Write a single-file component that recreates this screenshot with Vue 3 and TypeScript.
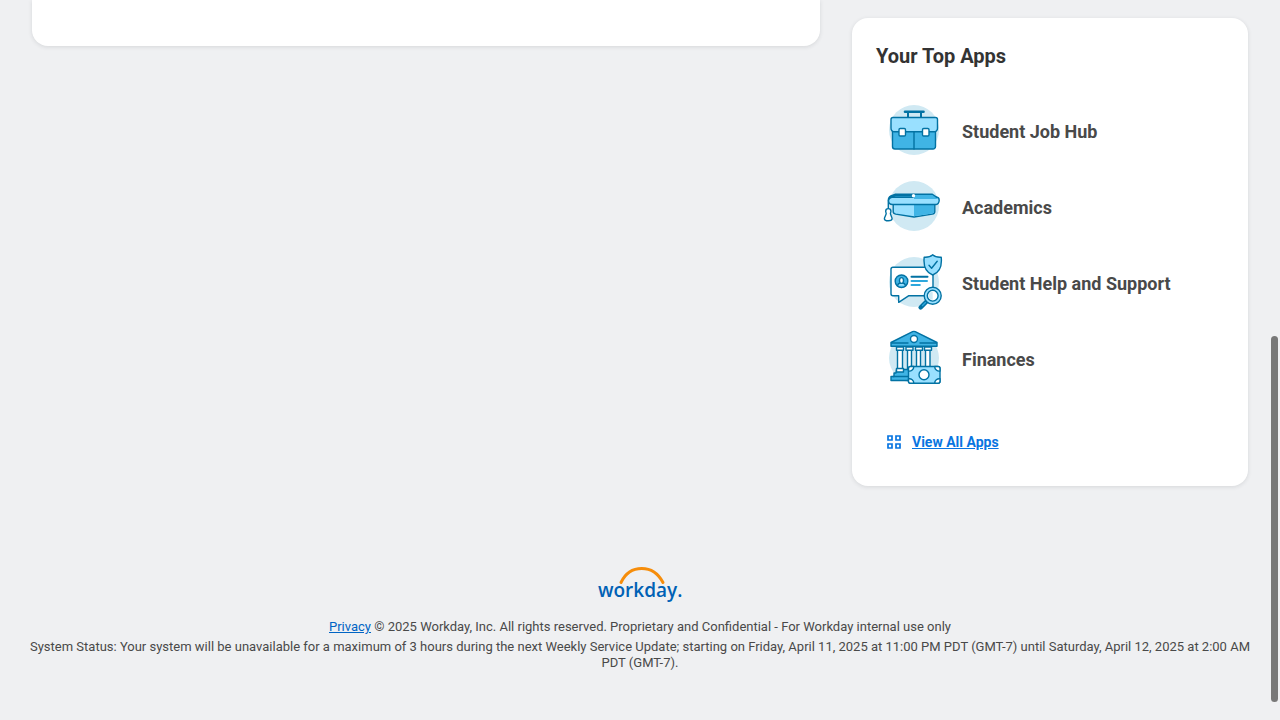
<script setup lang="ts">
type IconName = 'briefcase' | 'cap' | 'support' | 'finance'

interface AppEntry {
  name: string
  icon: IconName
}

const apps: AppEntry[] = [
  { name: 'Student Job Hub', icon: 'briefcase' },
  { name: 'Academics', icon: 'cap' },
  { name: 'Student Help and Support', icon: 'support' },
  { name: 'Finances', icon: 'finance' },
]
</script>

<template>
  <div class="page">
    <main class="columns">
      <section class="card feed" aria-label="Feed"></section>

      <section class="card apps" aria-labelledby="apps-title">
        <h2 id="apps-title" class="title">Your Top Apps</h2>
        <ul class="list">
          <li v-for="app in apps" :key="app.name">
            <a class="app" href="#">
              <svg class="icon" viewBox="0 -2 76 76" aria-hidden="true">
                <circle class="halo" cx="38" cy="34" r="25" />

                <g v-if="app.icon === 'briefcase'" class="line">
                  <path class="none" d="M32 22v-6M45 22v-6" stroke-width="2" />
                  <path class="none" d="M29 15.7h18.5" stroke-width="2.6" />
                  <path class="mid" d="M16.5 34h43v16.500a2.500 2.500 0 0 1-2.500 2.500H19a2.500 2.500 0 0 1-2.500-2.500z" />
                  <path class="none" d="M38 36v17" />
                  <path class="light" d="M17 21.500h42.500a2 2 0 0 1 2 2V32a3.500 3.500 0 0 1-3.500 3.800H18.500A3.500 3.500 0 0 1 15 32v-8.500a2 2 0 0 1 2-2z" />
                  <rect class="white" x="23" y="32.500" width="6.500" height="7.500" rx="1.200" />
                  <rect class="white" x="46.500" y="32.500" width="6.500" height="7.500" rx="1.200" />
                </g>

                <g v-else-if="app.icon === 'cap'" class="line">
                  <path class="light" d="M17.200 31v8.500c0 1.800 1 2.300 2.500 2.600L38 45l18.300-2.900c1.700-.3 2.500-1 2.500-2.600V31z" />
                  <path class="mid bare" d="M38 32h20v7.500c0 1.200-.5 1.700-1.800 2L38 44.300z" />
                  <path class="mid" d="M19 22.200h37l6 3.800H14z" />
                  <path class="light" d="M14 25.300h46.500c1.600 0 2.700 1.300 2.700 3s-1.200 4.200-3 4.200H16.500c-2.500 0-4-1.700-4-4z" />
                  <path class="mid bare" d="M38 23h18l6 4H38z" />
                  <path class="none" d="M36 23.500H19.500L14 26" />
                  <circle class="white bare" cx="37.500" cy="23.700" r="1.700" />
                  <path class="none" d="M12.300 37V28c0-2.500 2-4.200 5.500-5" />
                  <path class="white" d="M9.700 39.200a2.600 2.600 0 0 1 5.200 0c0 1-.5 1.700-.5 2.300 0 1.200 1.800 4 1.700 5.200-.1 1.500-1.700 2.100-3.800 2.100s-3.900-.6-3.900-2.100c0-1.300 1.800-4 1.800-5.200 0-.7-.5-1.200-.5-2.300z" />
                </g>

                <g v-else-if="app.icon === 'support'" class="line">
                  <path class="white" d="M17 19.300h38a2 2 0 0 1 2 2v24.500a2 2 0 0 1-2 2H32.500l-9.800 6.500v-6.500H17a2 2 0 0 1-2-2V21.300a2 2 0 0 1 2-2z" />
                  <circle class="mid" cx="25.500" cy="33.300" r="6.300" />
                  <path class="light" d="M21.700 37.700c0-2 1.400-2.700 3.800-2.700s3.800.7 3.800 2.700" />
                  <ellipse class="white" cx="25.500" cy="32.500" rx="2" ry="2.900" />
                  <path class="none" d="M35.500 28.700h16" stroke-width="2" />
                  <path class="none blue" d="M35.500 33h15.500M35.500 37h8.300" stroke-width="2" />
                  <path class="light" d="M56.700 6.800c2 1.900 5 2.600 8.500 2.400.8 7.300-.2 14.800-8.500 17.800-8.300-3-9.300-10.500-8.500-17.800 3.500.2 6.500-.5 8.500-2.400z" />
                  <path class="none" d="M53 17.200l2.600 3 5.600-7" />
                  <path class="none" d="M50.800 53.300l-6.200 6.200" stroke-width="4.400" />
                  <path class="none blue" d="M49.500 54.500l-3 3" stroke-width="1.400" />
                  <circle class="light" cx="56.700" cy="47.700" r="8.500" />
                  <circle class="white" cx="56.700" cy="47.700" r="5.400" />
                  <path class="halo bare" d="M56.700 47.700v-4a4 4 0 0 0-4 4 4 4 0 0 0 4 4z" />
                </g>

                <g v-else class="line">
                  <path class="mid" d="M20.500 45.500h34l1 3.500h3v3.500h3v4h-46.500v-4h3V49h2z" />
                  <path class="none" d="M17 52.500h40" />
                  <path class="white" d="M21.500 25.500h5V45h-5zM31.500 25.500h4V45h-4zM40.500 25.500h4V45h-4zM49.500 25.500h4.500V45h-4.500z" />
                  <path class="white" d="M20.500 23h7v3.200h-7zM30 23h7v3.200h-7zM39.500 23h7v3.200h-7zM48.500 23h7v3.200h-7zM20.500 44.500h7V48h-7z" />
                  <path class="mid" d="M15 18.500L36.600 7.700c.9-.4 1.700-.4 2.600 0L61 18.500v3.700H15z" />
                  <path class="none" d="M15.500 19H32M44 19h16.500" />
                  <circle class="white" cx="38" cy="15" r="3.500" />
                  <rect class="light" x="32.500" y="42.500" width="31.500" height="16.800" rx="2" />
                  <path class="white" d="M34.500 42.500h3.300a4.500 4.500 0 0 1-5.300 4.500v-2.500a2 2 0 0 1 2-2zM62 42.500h-3.300a4.500 4.500 0 0 0 5.300 4.500v-2.500a2 2 0 0 0-2-2zM34.500 59.300h3.300a4.500 4.500 0 0 0-5.300-4.500v2.500a2 2 0 0 0 2 2zM62 59.300h-3.300a4.500 4.500 0 0 1 5.300-4.500v2.500a2 2 0 0 1-2 2z" />
                  <circle class="white" cx="48" cy="50.700" r="5" />
                </g>
              </svg>
              <span>{{ app.name }}</span>
            </a>
          </li>
        </ul>
        <a class="all" href="#">
          <svg class="grid-icon" viewBox="0 0 16 16" aria-hidden="true">
            <path d="M2 2h4v4H2zM10 2h4v4h-4zM2 10h4v4H2zM10 10h4v4h-4z" />
          </svg>
          <span>View All Apps</span>
        </a>
      </section>
    </main>

    <footer class="footer">
      <svg class="logo" viewBox="0 0 88 40" role="img" aria-label="Workday">
        <path class="arc" d="M25 18.500C29 10 36 4.500 45.800 4.500S62.500 10 67 18.500" />
        <text x="2" y="33">workday.</text>
      </svg>
      <p class="legal">
        <a href="#">Privacy</a> © 2025 Workday, Inc. All rights reserved. Proprietary and Confidential - For Workday internal use only
      </p>
      <p class="status">
        System Status: Your system will be unavailable for a maximum of 3 hours during the next Weekly Service Update; starting on Friday, April 11, 2025 at 11:00 PM PDT (GMT-7) until Saturday, April 12, 2025 at 2:00 AM PDT (GMT-7).
      </p>
    </footer>

    <div class="scroll-thumb" aria-hidden="true"></div>
  </div>
</template>

<style>
body {
  background: #eff0f2;
}
</style>

<style scoped>
.page {
  box-sizing: border-box;
  min-height: 100vh;
  overflow: hidden;
  background: #eff0f2;
  color: #494949;
  font-family: Roboto, "Liberation Sans", sans-serif;
}
.columns {
  display: grid;
  grid-template-columns: minmax(0, 1fr) 396px;
  gap: 32px;
  align-items: start;
  padding: 0 32px;
}
.card {
  box-sizing: border-box;
  border-radius: 16px;
  background: #fff;
  box-shadow: 0 1px 4px rgba(31, 38, 46, 0.12);
}
.feed {
  border-radius: 0 0 16px 16px;
  min-height: 46px;
}
.apps {
  margin-top: 18px;
  padding: 24px;
}
.title {
  margin: 0 0 24px;
  color: #333;
  font-size: 20px;
  font-weight: 700;
  line-height: 28px;
}
.list {
  margin: 0 0 24px;
  padding: 0;
  list-style: none;
}
.app {
  display: flex;
  align-items: center;
  gap: 10px;
  color: #494949;
  font-size: 18px;
  font-weight: 700;
  line-height: 24px;
  text-decoration: none;
}
.icon {
  flex: none;
  width: 76px;
  height: 76px;
}
.halo {
  fill: #d0e9f3;
}
.line {
  stroke: #0272a3;
  stroke-width: 1.4;
  stroke-linejoin: round;
  stroke-linecap: round;
}
.none {
  fill: none;
}
.light {
  fill: #99e0ff;
}
.mid {
  fill: #40b4e5;
}
.white {
  fill: #fff;
}
.bare {
  stroke: none;
}
.blue {
  stroke: #2da7dc;
}
.all {
  display: flex;
  align-items: center;
  gap: 10px;
  height: 40px;
  padding-left: 10px;
  color: #0875e1;
  font-size: 14px;
  font-weight: 700;
}
.grid-icon {
  width: 16px;
  height: 16px;
  fill: none;
  stroke: #0875e1;
  stroke-width: 1.7;
}
.footer {
  display: flex;
  flex-direction: column;
  align-items: center;
  padding: 78px 24px 48px;
  font-size: 13px;
  line-height: 16px;
  text-align: center;
}
.logo {
  width: 88px;
  height: 40px;
  margin-bottom: 15px;
}
.logo text {
  fill: #0061b5;
  font-family: "Open Sans", "Noto Sans", sans-serif;
  font-size: 19px;
  font-weight: 600;
}
.arc {
  fill: none;
  stroke: #f68d0b;
  stroke-width: 3;
  stroke-linecap: round;
}
.legal,
.status {
  margin: 0;
}
.legal {
  margin-bottom: 4px;
}
.legal a {
  color: #0064c4;
}
.scroll-thumb {
  position: fixed;
  right: 2px;
  bottom: 18px;
  width: 7px;
  height: 366px;
  border-radius: 4px;
  background: #787878;
}
</style>
